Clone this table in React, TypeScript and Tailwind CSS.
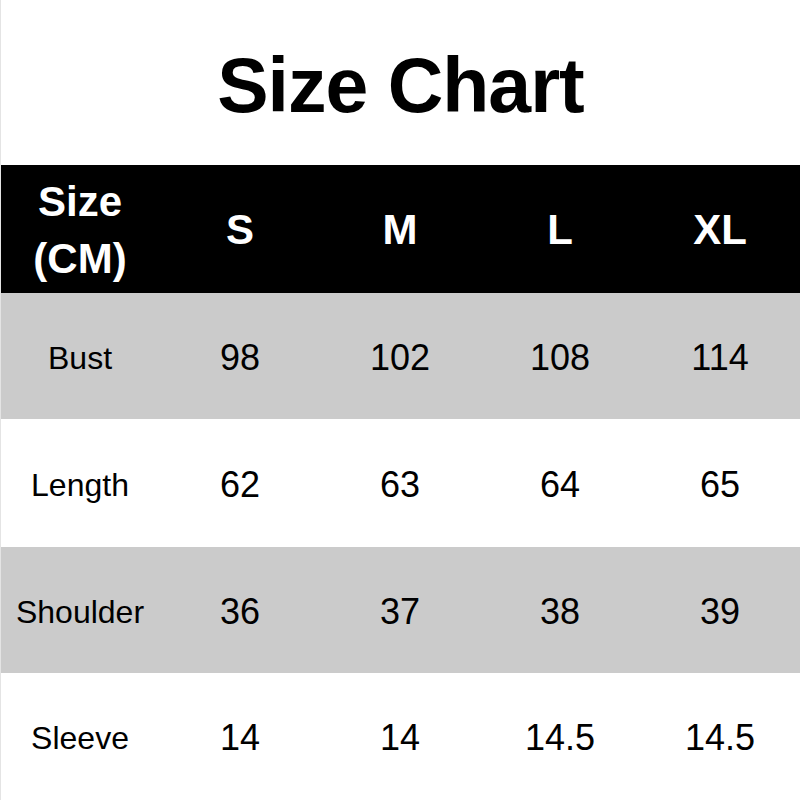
import React from "react";

const rows: { label: string; values: string[]; gray: boolean; h: string }[] = [
  { label: "Bust", values: ["98", "102", "108", "114"], gray: true, h: "h-[126px]" },
  { label: "Length", values: ["62", "63", "64", "65"], gray: false, h: "h-[128px]" },
  { label: "Shoulder", values: ["36", "37", "38", "39"], gray: true, h: "h-[126px]" },
  { label: "Sleeve", values: ["14", "14", "14.5", "14.5"], gray: false, h: "h-[127px]" },
];

export default function App() {
  return (
    <div
      className="w-[800px] h-[800px] bg-white flex flex-col border-l border-[#e4e4e4] overflow-hidden text-black"
      style={{ fontFamily: '"Liberation Sans", Arial, sans-serif' }}
    >
      <div className="h-[165px] flex items-center justify-center shrink-0">
        <h1 className="text-[77px] font-bold leading-none tracking-[-1px] pt-[5px]">Size Chart</h1>
      </div>
      <div className="h-[128px] bg-black grid grid-cols-5 items-center text-white font-bold shrink-0 -ml-px">
        <div className="flex flex-col items-center text-[42px] leading-[57px] pt-[2px]">
          <span>Size</span>
          <span>(CM)</span>
        </div>
        {["S", "M", "L", "XL"].map((s) => (
          <div key={s} className="text-center text-[42px] leading-none pt-[2px]">
            {s}
          </div>
        ))}
      </div>
      {rows.map((r) => (
        <div
          key={r.label}
          className={`${r.h} grid grid-cols-5 items-center shrink-0 -ml-px pt-[3px] ${r.gray ? "bg-[#cbcbcb]" : "bg-white"}`}
        >
          <div className="text-center text-[32px] leading-none">{r.label}</div>
          {r.values.map((v, i) => (
            <div key={i} className="text-center text-[36px] leading-none">
              {v}
            </div>
          ))}
        </div>
      ))}
    </div>
  );
}
